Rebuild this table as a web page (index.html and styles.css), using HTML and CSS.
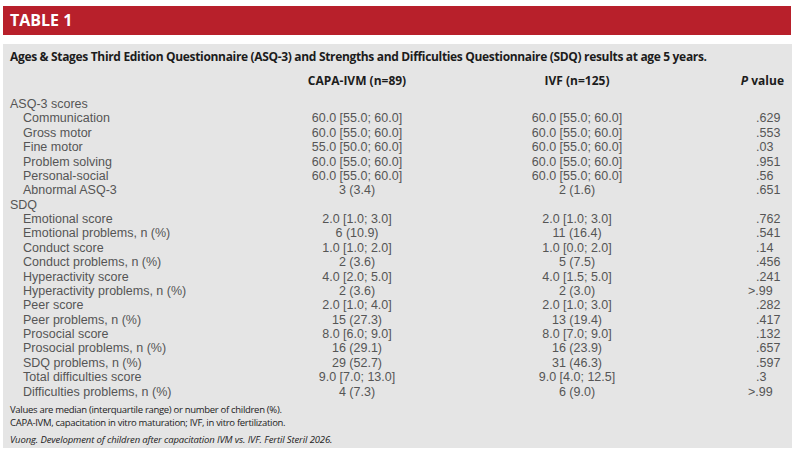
FILE: index.html
```html
<!DOCTYPE html>
<html lang="en">
<head>
<meta charset="utf-8">
<title>Table 1</title>
<link rel="stylesheet" href="styles.css">
</head>
<body>
<div class="page">
  <div class="banner">TABLE 1</div>
  <div class="panel">
    <div class="caption">Ages &amp; Stages Third Edition Questionnaire (ASQ-3) and Strengths and Difficulties Questionnaire (SDQ) results at age 5 years.</div>
    <table class="data">
      <colgroup>
        <col class="c-label"><col class="c-a"><col class="c-b"><col class="c-p">
      </colgroup>
      <thead>
        <tr><th class="lab"></th><th>CAPA-IVM (n=89)</th><th>IVF (n=125)</th><th class="ph"><i>P</i> value</th></tr>
      </thead>
      <tbody>
        <tr><td class="lab">ASQ-3 scores</td><td></td><td></td><td class="p"></td></tr>
        <tr><td class="lab sub">Communication</td><td>60.0 [55.0; 60.0]</td><td>60.0 [55.0; 60.0]</td><td class="p">.629</td></tr>
        <tr><td class="lab sub">Gross motor</td><td>60.0 [55.0; 60.0]</td><td>60.0 [55.0; 60.0]</td><td class="p">.553</td></tr>
        <tr><td class="lab sub">Fine motor</td><td>55.0 [50.0; 60.0]</td><td>60.0 [55.0; 60.0]</td><td class="p">.03</td></tr>
        <tr><td class="lab sub">Problem solving</td><td>60.0 [55.0; 60.0]</td><td>60.0 [55.0; 60.0]</td><td class="p">.951</td></tr>
        <tr><td class="lab sub">Personal-social</td><td>60.0 [55.0; 60.0]</td><td>60.0 [55.0; 60.0]</td><td class="p">.56</td></tr>
        <tr><td class="lab sub">Abnormal ASQ-3</td><td>3 (3.4)</td><td>2 (1.6)</td><td class="p">.651</td></tr>
        <tr><td class="lab">SDQ</td><td></td><td></td><td class="p"></td></tr>
        <tr><td class="lab sub">Emotional score</td><td>2.0 [1.0; 3.0]</td><td>2.0 [1.0; 3.0]</td><td class="p">.762</td></tr>
        <tr><td class="lab sub">Emotional problems, n (%)</td><td>6 (10.9)</td><td>11 (16.4)</td><td class="p">.541</td></tr>
        <tr><td class="lab sub">Conduct score</td><td>1.0 [1.0; 2.0]</td><td>1.0 [0.0; 2.0]</td><td class="p">.14</td></tr>
        <tr><td class="lab sub">Conduct problems, n (%)</td><td>2 (3.6)</td><td>5 (7.5)</td><td class="p">.456</td></tr>
        <tr><td class="lab sub">Hyperactivity score</td><td>4.0 [2.0; 5.0]</td><td>4.0 [1.5; 5.0]</td><td class="p">.241</td></tr>
        <tr><td class="lab sub">Hyperactivity problems, n (%)</td><td>2 (3.6)</td><td>2 (3.0)</td><td class="p"><span class="gt">&gt;</span>.99</td></tr>
        <tr><td class="lab sub">Peer score</td><td>2.0 [1.0; 4.0]</td><td>2.0 [1.0; 3.0]</td><td class="p">.282</td></tr>
        <tr><td class="lab sub">Peer problems, n (%)</td><td>15 (27.3)</td><td>13 (19.4)</td><td class="p">.417</td></tr>
        <tr><td class="lab sub">Prosocial score</td><td>8.0 [6.0; 9.0]</td><td>8.0 [7.0; 9.0]</td><td class="p">.132</td></tr>
        <tr><td class="lab sub">Prosocial problems, n (%)</td><td>16 (29.1)</td><td>16 (23.9)</td><td class="p">.657</td></tr>
        <tr><td class="lab sub">SDQ problems, n (%)</td><td>29 (52.7)</td><td>31 (46.3)</td><td class="p">.597</td></tr>
        <tr><td class="lab sub">Total difficulties score</td><td>9.0 [7.0; 13.0]</td><td>9.0 [4.0; 12.5]</td><td class="p">.3</td></tr>
        <tr><td class="lab sub">Difficulties problems, n (%)</td><td>4 (7.3)</td><td>6 (9.0)</td><td class="p"><span class="gt">&gt;</span>.99</td></tr>
      </tbody>
    </table>
    <div class="notes">
      <p>Values are median (interquartile range) or number of children (%).</p>
      <p>CAPA-IVM, capacitation in vitro maturation; IVF, in vitro fertilization.</p>
    </div>
    <p class="cite">Vuong. Development of children after capacitation IVM vs. IVF. Fertil Steril 2026.</p>
  </div>
</div>
</body>
</html>
```

FILE: styles.css
```css
html, body {
  margin: 0;
  padding: 0;
  background: #ffffff;
}

.page {
  padding: 6px 4px 0 3px;
  font-family: "Open Sans", "Noto Sans", "Liberation Sans", sans-serif;
}

.banner {
  background: #b8202b;
  color: #ffffff;
  font-weight: 700;
  font-size: 16px;
  line-height: 29px;
  height: 29px;
  padding-left: 7px;
  margin-right: 1px;
}

.panel {
  margin-top: 9px;
  background: #e5e5e5;
  padding: 5px 7px 0 7px;
  height: 399px;
}

.caption {
  font-weight: 700;
  font-size: 12px;
  line-height: 16px;
  letter-spacing: -0.33px;
  color: #1c1c1c;
}

.data {
  border-collapse: collapse;
  table-layout: fixed;
  width: 775px;
  margin-top: 8px;
}

.c-label { width: 250px; }
.c-a { width: 194px; }
.c-b { width: 246px; }
.c-p { width: 85px; }

.data th {
  font-weight: 700;
  font-size: 12px;
  line-height: 16px;
  color: #1c1c1c;
  text-align: center;
  padding: 0 0 8px 0;
}

.data th.ph {
  text-align: right;
  padding-right: 1px;
}

.data td {
  font-family: "Liberation Sans", "Open Sans", sans-serif;
  font-size: 12.5px;
  line-height: 14.37px;
  color: #555555;
  text-align: center;
  padding: 0;
  white-space: nowrap;
}

.data td.lab {
  text-align: left;
}

.data td.sub {
  padding-left: 13px;
}

.data td.p {
  text-align: left;
  padding-left: 56px;
}

.gt {
  margin-left: -8px;
}

.notes {
  margin-top: 4px;
}

.notes p {
  margin: 0;
  font-size: 9.5px;
  line-height: 13px;
  letter-spacing: -0.3px;
  color: #222222;
}

.cite {
  margin: 4px 0 0 0;
  font-size: 9.5px;
  line-height: 13px;
  letter-spacing: -0.12px;
  font-style: italic;
  color: #222222;
}
```
